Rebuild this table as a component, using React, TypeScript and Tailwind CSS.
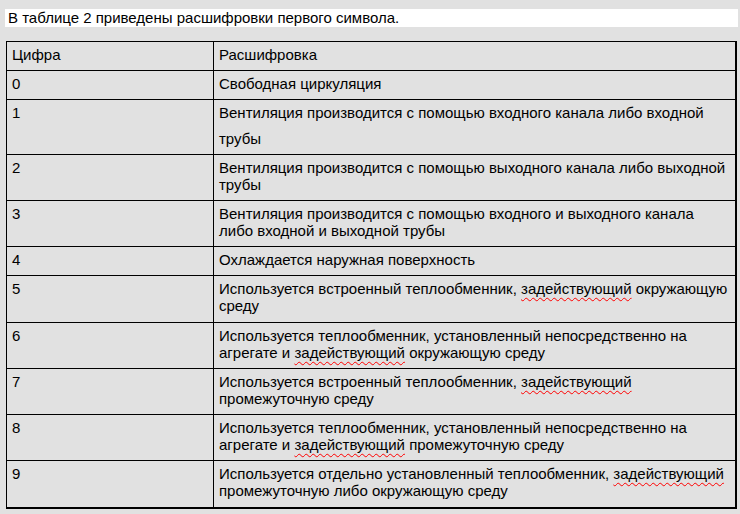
import React from "react";

const W = ({ children }: { children: React.ReactNode }) => (
  <span className="underline decoration-wavy decoration-[#ff0000] decoration-1 underline-offset-[3px]">{children}</span>
);

type Row = { n: string; h: string; lines: React.ReactNode[]; gap?: boolean };

const rows: Row[] = [
  { n: "Цифра", h: "h-[29px]", lines: ["Расшифровка"] },
  { n: "0", h: "h-[29px]", lines: ["Свободная циркуляция"] },
  {
    n: "1",
    h: "h-[55px]",
    gap: true,
    lines: ["Вентиляция производится с помощью входного канала либо входной", "трубы"],
  },
  {
    n: "2",
    h: "h-[46px]",
    lines: ["Вентиляция производится с помощью выходного канала либо выходной", "трубы"],
  },
  {
    n: "3",
    h: "h-[46px]",
    lines: ["Вентиляция производится с помощью входного и выходного канала", "либо входной и выходной трубы"],
  },
  { n: "4", h: "h-[29px]", lines: ["Охлаждается наружная поверхность"] },
  {
    n: "5",
    h: "h-[47px]",
    lines: [
      <>Используется встроенный теплообменник, <W>задействующий</W> окружающую</>,
      "среду",
    ],
  },
  {
    n: "6",
    h: "h-[46px]",
    lines: [
      "Используется теплообменник, установленный непосредственно на",
      <>агрегате и <W>задействующий</W> окружающую среду</>,
    ],
  },
  {
    n: "7",
    h: "h-[46px]",
    lines: [
      <>Используется встроенный теплообменник, <W>задействующий</W></>,
      "промежуточную среду",
    ],
  },
  {
    n: "8",
    h: "h-[46px]",
    lines: [
      "Используется теплообменник, установленный непосредственно на",
      <>агрегате и <W>задействующий</W> промежуточную среду</>,
    ],
  },
  {
    n: "9",
    h: "h-[46px]",
    lines: [
      <>Используется отдельно установленный теплообменник, <W>задействующий</W></>,
      "промежуточную либо окружающую среду",
    ],
  },
];

export default function App() {
  return (
    <div
      className="w-[740px] h-[514px] bg-[#e1e1e1] text-black text-[15px] leading-[17px] overflow-hidden"
      style={{ fontFamily: '"Liberation Sans", Arial, sans-serif' }}
    >
      <div className="pt-[9px] pl-[5px] pr-[2px]">
        <div className="bg-white h-[18px] pl-[3px] leading-[18px] whitespace-nowrap">
          В таблице 2 приведены расшифровки первого символа.
        </div>
      </div>
      <div className="ml-[6px] mt-[14px] w-[731px] border-l border-t border-r-2 border-b-2 border-black">
        {rows.map((r, i) => (
          <div
            key={i}
            className={`flex ${r.h} ${i < rows.length - 1 ? "border-b border-black" : ""}`}
          >
            <div className="w-[207px] shrink-0 border-r border-black pl-[5px] pt-[4px]">{r.n}</div>
            <div className="flex-1 pl-[5px] pt-[4px] whitespace-nowrap">
              {r.lines.map((l, j) => (
                <div key={j} className={r.gap && j === 1 ? "mt-[9px]" : ""}>
                  {l}
                </div>
              ))}
            </div>
          </div>
        ))}
      </div>
    </div>
  );
}
